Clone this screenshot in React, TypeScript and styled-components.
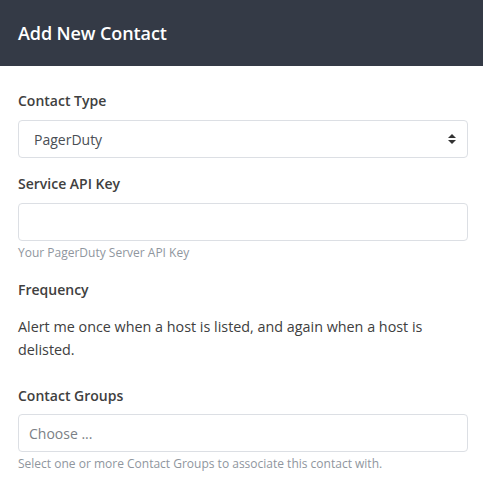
import React from "react";
import styled, { createGlobalStyle } from "styled-components";

const Global = createGlobalStyle`
  html, body { margin: 0; padding: 0; background: #ffffff; }
  body { font-family: "Open Sans", "Noto Sans", sans-serif; }
  * { box-sizing: border-box; }
`;

const Header = styled.header`
  height: 66px;
  background: #343a46;
  display: flex;
  align-items: center;
  padding: 0 18px;
`;

const Title = styled.h1`
  margin: 0;
  color: #ffffff;
  font-size: 18px;
  font-weight: 600;
  line-height: 24px;
  letter-spacing: -0.1px;
`;

const Body = styled.div`
  padding: 25px 15px 0 18px;
`;

const Group = styled.div<{ $mb: number }>`
  margin-bottom: ${(p) => p.$mb}px;
`;

const Label = styled.div<{ $mb?: number }>`
  font-size: 14px;
  font-weight: 600;
  line-height: 20px;
  color: #404040;
  margin-bottom: ${(p) => p.$mb ?? 9}px;
`;

const Field = styled.div<{ $muted?: boolean; $pl?: number }>`
  height: 38px;
  border: 1px solid #dcdfe4;
  border-radius: 4px;
  display: flex;
  align-items: center;
  justify-content: space-between;
  padding: 0 11px 0 ${(p) => p.$pl ?? 10}px;
  font-size: 14px;
  color: ${(p) => (p.$muted ? "#7b7f86" : "#4a4e54")};
  background: #fff;
`;

const Help = styled.div`
  margin-top: 4px;
  font-size: 12px;
  line-height: 16px;
  color: #8f969e;
`;

const Para = styled.p`
  margin: 0;
  font-size: 14.35px;
  line-height: 23px;
  color: #404040;
`;

const Arrows = () => (
  <svg width="8" height="12" viewBox="0 0 8 12">
    <path d="M4 1 L8 5 H0 Z" fill="#333" />
    <path d="M4 11 L8 7 H0 Z" fill="#333" />
  </svg>
);

export default function App() {
  return (
    <>
      <Global />
      <Header>
        <Title>Add New Contact</Title>
      </Header>
      <Body>
        <Group $mb={16}>
          <Label>Contact Type</Label>
          <Field $pl={15}>
            <span>PagerDuty</span>
            <Arrows />
          </Field>
        </Group>
        <Group $mb={19}>
          <Label>Service API Key</Label>
          <Field />
          <Help>Your PagerDuty Server API Key</Help>
        </Group>
        <Group $mb={25}>
          <Label $mb={15}>Frequency</Label>
          <Para>Alert me once when a host is listed, and again when a host is delisted.</Para>
        </Group>
        <Group $mb={0}>
          <Label $mb={8}>Contact Groups</Label>
          <Field $muted>
            <span>Choose ...</span>
          </Field>
          <Help>Select one or more Contact Groups to associate this contact with.</Help>
        </Group>
      </Body>
    </>
  );
}
